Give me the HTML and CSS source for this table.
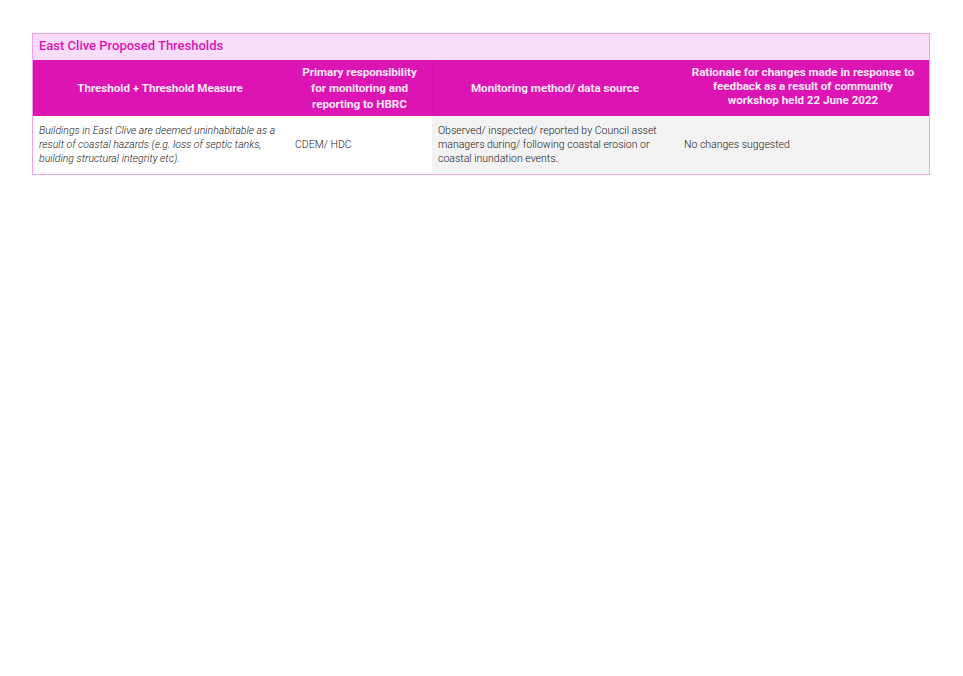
FILE: index.html
```html
<!DOCTYPE html>
<html>
<head>
<meta charset="utf-8">
<link rel="stylesheet" href="styles.css">
</head>
<body>
<div class="table">
  <div class="title">East Clive Proposed Thresholds</div>
  <div class="row head">
    <div class="cell c1">Threshold + Threshold Measure</div>
    <div class="cell c2">Primary responsibility for monitoring and reporting to HBRC</div>
    <div class="cell c3">Monitoring method/ data source</div>
    <div class="cell c4">Rationale for changes made in response to feedback as a result of community workshop held 22 June 2022</div>
  </div>
  <div class="row body">
    <div class="cell c1 italic">Buildings in East Clive are deemed uninhabitable as a result of coastal hazards (e.g. loss of septic tanks, building structural integrity etc).</div>
    <div class="cell c2">CDEM/ HDC</div>
    <div class="cell c3 grey">Observed/ inspected/ reported by Council asset managers during/ following coastal erosion or coastal inundation events.</div>
    <div class="cell c4 grey">No changes suggested</div>
  </div>
</div>
</body>
</html>
```
FILE: styles.css
```css
html, body { margin: 0; padding: 0; background: #fff; }
body { padding: 33px 0 0 32px; font-family: Roboto, "Liberation Sans", sans-serif; }
.table {
  width: 898px;
  border: 1px solid #f3a0e6;
  box-sizing: border-box;
}
.title {
  height: 26px;
  background: #f9ddf8;
  color: #dc14b4;
  font-size: 13px;
  font-weight: 500;
  padding-left: 6px;
  padding-bottom: 3px;
  display: flex;
  align-items: center;
  box-sizing: border-box;
}
.row { display: grid; grid-template-columns: 254px 145px 245px 1fr; }
.head { background: #dc14b4; height: 56px; }
.head .cell {
  color: #fde8f8;
  font-weight: 700;
  font-size: 11.6px;
  line-height: 16px;
  text-align: center;
  justify-content: center;
  padding: 0 14px;
}
.head .c4 { line-height: 14px; padding-bottom: 4px; }
.head .c3 { border-left: 1px solid #d010a8; }
.cell { display: flex; align-items: center; box-sizing: border-box; }
.body { height: 58px; }
.body .cell {
  font-size: 10.5px;
  line-height: 14px;
  color: #1a1a1a;
  font-weight: 300;
  padding: 0 6px;
}
.body .c2 { padding-left: 8px; }
.body .c4 { padding-left: 7px; }
.italic { font-style: italic; }
.grey { background: #f2f2f2; }
```
